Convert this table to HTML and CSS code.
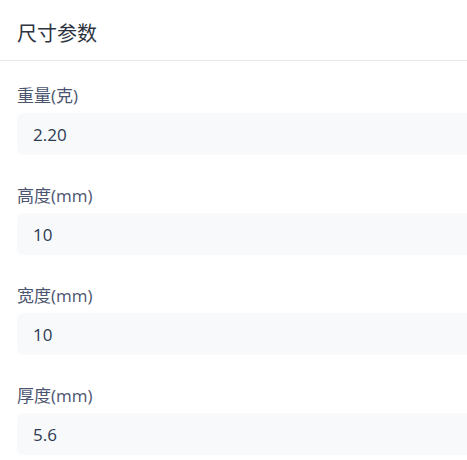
FILE: index.html
```html
<!DOCTYPE html>
<html lang="zh">
<head>
<meta charset="utf-8">
<link rel="stylesheet" href="styles.css">
</head>
<body>
<div class="panel">
  <div class="panel-header">尺寸参数</div>
  <div class="panel-body">
    <div class="field">
      <div class="label">重量(克)</div>
      <div class="value">2.20</div>
    </div>
    <div class="field">
      <div class="label">高度(mm)</div>
      <div class="value">10</div>
    </div>
    <div class="field">
      <div class="label">宽度(mm)</div>
      <div class="value">10</div>
    </div>
    <div class="field">
      <div class="label">厚度(mm)</div>
      <div class="value">5.6</div>
    </div>
  </div>
</div>
</body>
</html>
```
FILE: styles.css
```css
html, body {
  margin: 0;
  padding: 0;
  background: #ffffff;
}
body {
  font-family: "Open Sans", "Noto Sans CJK SC", sans-serif;
}
.panel-header {
  height: 61px;
  box-sizing: border-box;
  border-bottom: 1px solid #e5e7eb;
  padding-left: 17px;
  padding-top: 4px;
  display: flex;
  align-items: center;
  font-size: 20px;
  color: #2d3440;
}
.panel-body {
  padding: 23px 0 0 17px;
  display: flex;
  flex-direction: column;
  gap: 29px;
}
.field {
  display: flex;
  flex-direction: column;
  gap: 5px;
}
.label {
  font-size: 17px;
  line-height: 24px;
  color: #4b5570;
}
.value {
  height: 42px;
  box-sizing: border-box;
  background: #f8f9fb;
  border-radius: 6px 0 0 6px;
  padding-left: 16px;
  display: flex;
  align-items: center;
  font-size: 17px;
  color: #2d3a52;
}
```
